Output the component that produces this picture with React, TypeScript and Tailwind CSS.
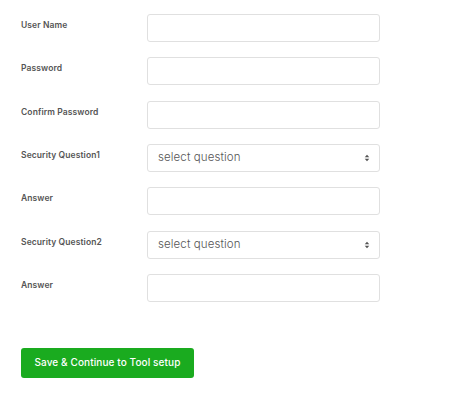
import React from "react";

const rows: { label: string; type: "input" | "select" }[] = [
  { label: "User Name", type: "input" },
  { label: "Password", type: "input" },
  { label: "Confirm Password", type: "input" },
  { label: "Security Question1", type: "select" },
  { label: "Answer", type: "input" },
  { label: "Security Question2", type: "select" },
  { label: "Answer", type: "input" },
];

function Arrows() {
  return (
    <svg width="6" height="8" viewBox="0 0 6 8" className="shrink-0">
      <path d="M3 0.8 L5.3 3.2 L0.7 3.2 Z" fill="#555" />
      <path d="M3 7.2 L5.3 4.8 L0.7 4.8 Z" fill="#555" />
    </svg>
  );
}

export default function App() {
  return (
    <div
      className="w-[450px] h-[401px] bg-white pl-[21px] pt-[14px]"
      style={{ fontFamily: "Inter, 'Open Sans', sans-serif" }}
    >
      <div className="flex flex-col gap-[15.33px]">
        {rows.map((r, i) => (
          <div key={i} className="flex items-start h-[28px]">
            <div className="w-[126px] pt-[6px] text-[8.5px] leading-[10px] font-semibold text-[#555] tracking-[0.1px]">
              {r.label}
            </div>
            <div className="w-[233px] h-[28px] border border-[#e0e0e0] rounded-[3px] bg-white flex items-center pl-[10px] pr-[9px]">
              {r.type === "select" && (
                <>
                  <span className="flex-1 text-[11.5px] font-light text-[#555] tracking-[0.1px]">select question</span>
                  <Arrows />
                </>
              )}
            </div>
          </div>
        ))}
      </div>
      <div className="mt-[46px]">
        <button className="w-[173px] h-[30px] rounded-[3px] bg-[#1aab1f] text-white text-[10px] font-medium flex items-center justify-center tracking-[0.1px]">
          Save &amp; Continue to Tool setup
        </button>
      </div>
    </div>
  );
}
